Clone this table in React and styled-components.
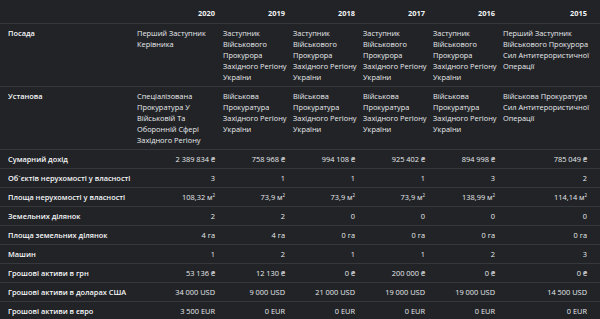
import React from "react";
import styled, { createGlobalStyle } from "styled-components";

const GlobalStyle = createGlobalStyle`
  html, body { margin: 0; padding: 0; background: #212327; }
  body { font-family: "Open Sans", "Noto Sans", sans-serif; }
`;

const Page = styled.div`
  width: 600px;
  background: #212327;
  color: #e6e8ea;
`;

const Table = styled.table`
  width: 600px;
  border-collapse: collapse;
  table-layout: fixed;
  font-size: 7.4px;
  line-height: 11px;
`;

const HeadCell = styled.th`
  font-weight: 700;
  color: #f4f5f6;
  text-align: ${(p) => (p.$label ? "left" : "right")};
  padding: 8px ${(p) => (p.$last ? "13px" : "4px")} 4px ${(p) => (p.$label ? "8px" : "4px")};
  border-bottom: 1px solid #35383d;
  vertical-align: bottom;
`;

const Row = styled.tr`
  border-top: 1px solid #35383d;
`;

const LabelCell = styled.th`
  font-weight: 600;
  color: #f6f7f8;
  text-align: left;
  vertical-align: top;
  padding: 3.5px 4px 3.5px 8px;
  white-space: nowrap;
`;

const ValueCell = styled.td`
  text-align: ${(p) => (p.$text ? "left" : "right")};
  vertical-align: top;
  padding: 3.5px ${(p) => (p.$last ? "13px" : "4px")} 3.5px 4px;
  color: #e8eaec;
  white-space: nowrap;
`;

const Line = styled.span`
  display: block;
`;

const Sup = styled.sup`
  font-size: 0.6em;
  line-height: 0;
  vertical-align: 0.6em;
`;

const years = ["2020", "2019", "2018", "2017", "2016", "2015"];
const colWidths = [133, 86, 70, 70, 70, 70, 101];

const zastup = ["Заступник", "Військового", "Прокурора", "Західного Регіону", "України"];
const vp = ["Військова", "Прокуратура", "Західного Регіону", "України"];

const textRows = [
  {
    label: "Посада",
    values: [
      ["Перший Заступник", "Керівника"],
      zastup, zastup, zastup, zastup,
      ["Перший Заступник", "Військового Прокурора", "Сил Антитерористичної", "Операції"],
    ],
  },
  {
    label: "Установа",
    values: [
      ["Спеціалізована", "Прокуратура У", "Військовій Та", "Оборонній Сфері", "Західного Регіону"],
      vp, vp, vp, vp,
      ["Військова Прокуратура", "Сил Антитерористичної", "Операції"],
    ],
  },
];

const m2 = (v) => (
  <>
    {v} м<Sup>2</Sup>
  </>
);

const numRows = [
  { label: "Сумарний дохід", values: ["2 389 834 ₴", "758 968 ₴", "994 108 ₴", "925 402 ₴", "894 998 ₴", "785 049 ₴"] },
  { label: "Об`єктів нерухомості у власності", values: ["3", "1", "1", "1", "3", "2"] },
  { label: "Площа нерухомості у власності", values: [m2("108,32"), m2("73,9"), m2("73,9"), m2("73,9"), m2("138,99"), m2("114,14")] },
  { label: "Земельних ділянок", values: ["2", "2", "0", "0", "0", "0"] },
  { label: "Площа земельних ділянок", values: ["4 га", "4 га", "0 га", "0 га", "0 га", "0 га"] },
  { label: "Машин", values: ["1", "2", "1", "1", "2", "3"] },
  { label: "Грошові активи в грн", values: ["53 136 ₴", "12 130 ₴", "0 ₴", "200 000 ₴", "0 ₴", "0 ₴"] },
  { label: "Грошові активи в доларах США", values: ["34 000 USD", "9 000 USD", "21 000 USD", "19 000 USD", "19 000 USD", "14 500 USD"] },
  { label: "Грошові активи в євро", values: ["3 500 EUR", "0 EUR", "0 EUR", "0 EUR", "0 EUR", "0 EUR"] },
];

export default function App() {
  return (
    <Page>
      <GlobalStyle />
      <Table>
        <colgroup>
          {colWidths.map((w, i) => (
            <col key={i} style={{ width: w }} />
          ))}
        </colgroup>
        <thead>
          <tr>
            <HeadCell $label />
            {years.map((y, i) => (
              <HeadCell key={y} $last={i === years.length - 1}>
                {y}
              </HeadCell>
            ))}
          </tr>
        </thead>
        <tbody>
          {textRows.map((r) => (
            <Row key={r.label}>
              <LabelCell>{r.label}</LabelCell>
              {r.values.map((lines, i) => (
                <ValueCell key={i} $text $last={i === 5}>
                  {lines.map((l, j) => (
                    <Line key={j}>{l}</Line>
                  ))}
                </ValueCell>
              ))}
            </Row>
          ))}
          {numRows.map((r) => (
            <Row key={r.label}>
              <LabelCell>{r.label}</LabelCell>
              {r.values.map((v, i) => (
                <ValueCell key={i} $last={i === 5}>
                  {v}
                </ValueCell>
              ))}
            </Row>
          ))}
        </tbody>
      </Table>
    </Page>
  );
}
